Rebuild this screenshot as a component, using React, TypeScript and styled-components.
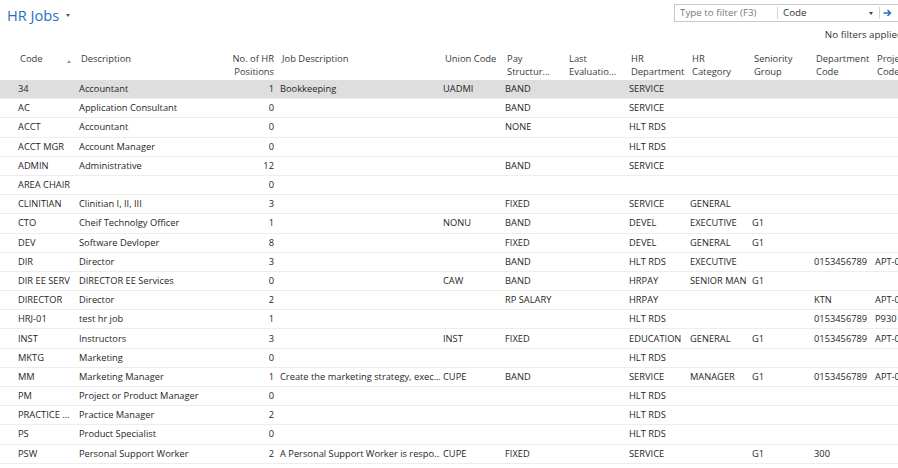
import React from 'react';
import styled, { createGlobalStyle } from 'styled-components';

const GlobalStyle = createGlobalStyle`
  html, body {
    margin: 0;
    padding: 0;
    background: #ffffff;
    overflow: hidden;
  }
  body {
    font-family: 'Open Sans', 'Noto Sans', Arial, sans-serif;
    color: #262626;
  }
`;

const COLUMNS = '61px 151px 50px 163px 62px 62px 62px 61px 62px 62px 61px 62px';

type Align = 'left' | 'right';

interface Column {
  title: string[];
  align?: Align;
}

const columns: Column[] = [
  { title: ['Code'] },
  { title: ['Description'] },
  { title: ['No. of HR', 'Positions'], align: 'right' },
  { title: ['Job Description'] },
  { title: ['Union Code'] },
  { title: ['Pay', 'Structur...'] },
  { title: ['Last', 'Evaluatio...'] },
  { title: ['HR', 'Department'] },
  { title: ['HR', 'Category'] },
  { title: ['Seniority', 'Group'] },
  { title: ['Department', 'Code'] },
  { title: ['Project', 'Code'] },
];

// code, description, positions, job description, union, pay, last eval, dept, category, seniority, dept code, project
const rows: string[][] = [
  ['34', 'Accountant', '1', 'Bookkeeping', 'UADMI', 'BAND', '', 'SERVICE', '', '', '', ''],
  ['AC', 'Application Consultant', '0', '', '', 'BAND', '', 'SERVICE', '', '', '', ''],
  ['ACCT', 'Accountant', '0', '', '', 'NONE', '', 'HLT RDS', '', '', '', ''],
  ['ACCT MGR', 'Account Manager', '0', '', '', '', '', 'HLT RDS', '', '', '', ''],
  ['ADMIN', 'Administrative', '12', '', '', 'BAND', '', 'SERVICE', '', '', '', ''],
  ['AREA CHAIR', '', '0', '', '', '', '', '', '', '', '', ''],
  ['CLINITIAN', 'Clinitian I, II, III', '3', '', '', 'FIXED', '', 'SERVICE', 'GENERAL', '', '', ''],
  ['CTO', 'Cheif Technolgy Officer', '1', '', 'NONU', 'BAND', '', 'DEVEL', 'EXECUTIVE', 'G1', '', ''],
  ['DEV', 'Software Devloper', '8', '', '', 'FIXED', '', 'DEVEL', 'GENERAL', 'G1', '', ''],
  ['DIR', 'Director', '3', '', '', 'BAND', '', 'HLT RDS', 'EXECUTIVE', '', '0153456789', 'APT-00001'],
  ['DIR EE SERV', 'DIRECTOR EE Services', '0', '', 'CAW', 'BAND', '', 'HRPAY', 'SENIOR MAN', 'G1', '', ''],
  ['DIRECTOR', 'Director', '2', '', '', 'RP SALARY', '', 'HRPAY', '', '', 'KTN', 'APT-00001'],
  ['HRJ-01', 'test hr job', '1', '', '', '', '', 'HLT RDS', '', '', '0153456789', 'P930'],
  ['INST', 'Instructors', '3', '', 'INST', 'FIXED', '', 'EDUCATION', 'GENERAL', 'G1', '0153456789', 'APT-00001'],
  ['MKTG', 'Marketing', '0', '', '', '', '', 'HLT RDS', '', '', '', ''],
  ['MM', 'Marketing Manager', '1', 'Create the marketing strategy, exec...', 'CUPE', 'BAND', '', 'SERVICE', 'MANAGER', 'G1', '0153456789', 'APT-00001'],
  ['PM', 'Project or Product Manager', '0', '', '', '', '', 'HLT RDS', '', '', '', ''],
  ['PRACTICE ...', 'Practice Manager', '2', '', '', '', '', 'HLT RDS', '', '', '', ''],
  ['PS', 'Product Specialist', '0', '', '', '', '', 'HLT RDS', '', '', '', ''],
  ['PSW', 'Personal Support Worker', '2', 'A Personal Support Worker is respo...', 'CUPE', 'FIXED', '', 'SERVICE', '', 'G1', '300', ''],
];

const Page = styled.div`
  width: 898px;
  height: 468px;
  overflow: hidden;
  display: flex;
  flex-direction: column;
`;

const TopBar = styled.div`
  display: flex;
  justify-content: space-between;
  align-items: flex-start;
  height: 26px;
`;

const Title = styled.div`
  display: flex;
  align-items: center;
  gap: 7px;
  padding: 5px 0 0 7px;
  font-size: 14.6px;
  color: #2a6ebf;
`;

const Caret = styled.span`
  width: 0;
  height: 0;
  border-left: 2px solid transparent;
  border-right: 2px solid transparent;
  border-top: 3px solid #555;
  margin-top: 1px;
`;

const FilterBox = styled.div`
  margin-top: 4px;
  margin-right: -4px;
  width: 228px;
  height: 18px;
  box-sizing: border-box;
  border: 1px solid #c9c9c9;
  display: flex;
  align-items: center;
  font-size: 9.8px;
`;

const FilterInput = styled.div`
  width: 103px;
  padding-left: 5px;
  box-sizing: border-box;
  color: #7a7a7a;
  border-right: 1px solid #d4d4d4;
  height: 12px;
  line-height: 12px;
`;

const FieldSelect = styled.div`
  flex: 0 0 102px;
  display: flex;
  align-items: center;
  justify-content: space-between;
  padding: 0 6px 0 5px;
  box-sizing: border-box;
  color: #333;
  border-right: 1px solid #d4d4d4;
  height: 12px;
  line-height: 12px;
`;

const SmallTriangle = styled.span`
  width: 0;
  height: 0;
  border-left: 2px solid transparent;
  border-right: 2px solid transparent;
  border-top: 3px solid #444;
`;

const GoButton = styled.div`
  flex: 1;
  display: flex;
  align-items: center;
  padding-left: 3px;
`;

const FilterNote = styled.div`
  align-self: flex-end;
  margin-right: -5px;
  font-size: 9.8px;
  color: #333;
  height: 20px;
  line-height: 17px;
`;

const Grid = styled.div`
  margin-top: 2px;
  width: 960px;
`;

const HeaderRow = styled.div`
  display: grid;
  grid-template-columns: ${COLUMNS};
  padding-left: 15px;
  padding-top: 4px;
  height: 32px;
  box-sizing: border-box;
`;

const HeaderCell = styled.div<{ $align?: Align }>`
  position: relative;
  padding: ${(p) => (p.$align === 'right' ? '0 3px' : '0 3px 0 5px')};
  font-size: 9.4px;
  line-height: 13px;
  color: #3a3a3a;
  text-align: ${(p) => p.$align ?? 'left'};
  white-space: nowrap;
`;

const SortArrow = styled.span`
  position: absolute;
  right: 5px;
  top: 8px;
  width: 0;
  height: 0;
  border-left: 2px solid transparent;
  border-right: 2px solid transparent;
  border-bottom: 3px solid #9a9a9a;
`;

const DataRow = styled.div<{ $selected?: boolean }>`
  display: grid;
  grid-template-columns: ${COLUMNS};
  padding-left: 15px;
  height: 19.2px;
  box-sizing: border-box;
  align-items: center;
  background: ${(p) => (p.$selected ? '#dedede' : 'transparent')};
  border-bottom: 1px solid #ededed;
`;

const Cell = styled.div<{ $align?: Align }>`
  padding: 0 3px;
  font-size: 9.3px;
  line-height: 18px;
  color: #262626;
  text-align: ${(p) => p.$align ?? 'left'};
  white-space: nowrap;
  overflow: hidden;
`;

export default function App() {
  return (
    <Page>
      <GlobalStyle />
      <TopBar>
        <Title>
          HR Jobs
          <Caret />
        </Title>
        <FilterBox>
          <FilterInput>Type to filter (F3)</FilterInput>
          <FieldSelect>
            Code
            <SmallTriangle />
          </FieldSelect>
          <GoButton>
            <svg width="9" height="8" viewBox="0 0 9 8">
              <path d="M0.5 4H7.5M4.5 1L7.5 4L4.5 7" stroke="#2a6ebf" strokeWidth="1.5" fill="none" />
            </svg>
          </GoButton>
        </FilterBox>
      </TopBar>
      <FilterNote>No filters applied</FilterNote>
      <Grid>
        <HeaderRow>
          {columns.map((col, i) => (
            <HeaderCell key={col.title.join(' ')} $align={col.align}>
              {col.title.map((line) => (
                <div key={line}>{line}</div>
              ))}
              {i === 0 && <SortArrow />}
            </HeaderCell>
          ))}
        </HeaderRow>
        {rows.map((row, r) => (
          <DataRow key={row[0]} $selected={r === 0}>
            {row.map((value, c) => (
              <Cell key={c} $align={columns[c].align}>
                {value}
              </Cell>
            ))}
          </DataRow>
        ))}
      </Grid>
    </Page>
  );
}
